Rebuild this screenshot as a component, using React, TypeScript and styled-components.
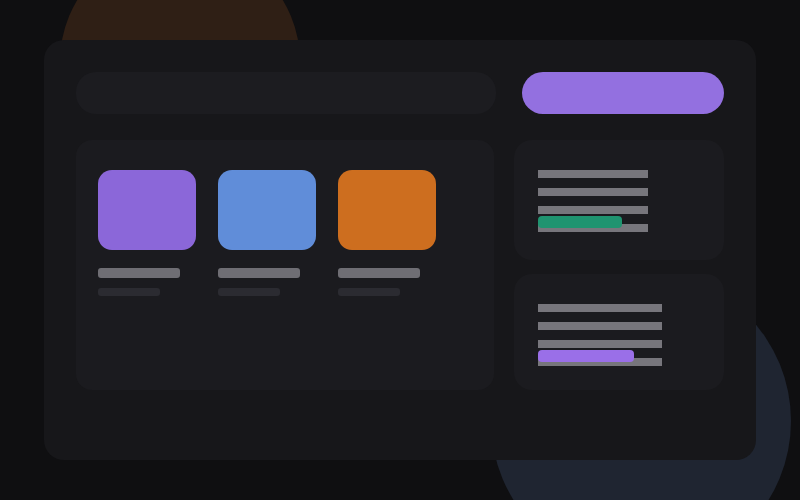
import styled, { createGlobalStyle } from "styled-components";

const GlobalStyle = createGlobalStyle`
  html, body {
    margin: 0;
    padding: 0;
    background: #0f0f11;
    font-family: "Inter", "Liberation Sans", sans-serif;
  }
`;

const tiles = [
  { color: "#8b67d9" },
  { color: "#608dd9" },
  { color: "#cd6e1f" },
];

const cards = [
  { lineWidth: 110, pill: 84, pillColor: "#1f9470", height: 120 },
  { lineWidth: 124, pill: 96, pillColor: "#9a6fe8", height: 116 },
];

function App() {
  return (
    <>
      <GlobalStyle />
      <Page>
        <Blob $size={240} $left={60} $top={-58} $color="#2f1f15" />
        <Blob $size={300} $left={491} $top={271} $color="#1f2531" />
        <Card>
          <Header>
            <Search />
            <Action />
          </Header>
          <Body>
            <Gallery>
              {tiles.map((t, i) => (
                <Item key={i}>
                  <Thumb $color={t.color} />
                  <Title />
                  <Caption />
                </Item>
              ))}
            </Gallery>
            <Side>
              {cards.map((c, i) => (
                <StatCard key={i} $height={c.height}>
                  <Lines>
                    {[0, 1, 2, 3].map((n) => (
                      <Line key={n} $width={c.lineWidth} />
                    ))}
                    <Pill $width={c.pill} $color={c.pillColor} />
                  </Lines>
                </StatCard>
              ))}
            </Side>
          </Body>
        </Card>
      </Page>
    </>
  );
}

const Page = styled.div`
  position: relative;
  width: 800px;
  height: 500px;
  overflow: hidden;
  background: #0f0f11;
`;

const Blob = styled.div<{ $size: number; $left: number; $top: number; $color: string }>`
  position: absolute;
  width: ${(p) => p.$size}px;
  height: ${(p) => p.$size}px;
  left: ${(p) => p.$left}px;
  top: ${(p) => p.$top}px;
  border-radius: 50%;
  background: ${(p) => p.$color};
`;

const Card = styled.div`
  position: relative;
  margin: 40px 44px 0;
  height: 420px;
  box-sizing: border-box;
  padding: 32px;
  border-radius: 20px;
  background: #17171a;
  display: flex;
  flex-direction: column;
  gap: 26px;
`;

const Header = styled.div`
  display: flex;
  gap: 26px;
  height: 42px;
`;

const Search = styled.div`
  width: 420px;
  border-radius: 20px;
  background: #1c1c20;
`;

const Action = styled.div`
  width: 202px;
  border-radius: 21px;
  background: #9370e0;
`;

const Body = styled.div`
  display: flex;
  gap: 20px;
`;

const Gallery = styled.div`
  width: 418px;
  height: 250px;
  box-sizing: border-box;
  padding: 30px 22px;
  border-radius: 16px;
  background: #1b1b1f;
  display: flex;
  gap: 22px;
  align-items: flex-start;
`;

const Item = styled.div`
  display: flex;
  flex-direction: column;
`;

const Thumb = styled.div<{ $color: string }>`
  width: 98px;
  height: 80px;
  border-radius: 14px;
  background: ${(p) => p.$color};
`;

const Title = styled.div`
  width: 82px;
  height: 10px;
  margin-top: 18px;
  border-radius: 3px;
  background: #6f6e74;
`;

const Caption = styled.div`
  width: 62px;
  height: 8px;
  margin-top: 10px;
  border-radius: 3px;
  background: #2b2b31;
`;

const Side = styled.div`
  width: 210px;
  display: flex;
  flex-direction: column;
  gap: 14px;
`;

const StatCard = styled.div<{ $height: number }>`
  height: ${(p) => p.$height}px;
  box-sizing: border-box;
  padding: 30px 24px;
  border-radius: 18px;
  background: #1b1b1f;
`;

const Lines = styled.div`
  position: relative;
  display: flex;
  flex-direction: column;
  gap: 10px;
`;

const Line = styled.div<{ $width: number }>`
  width: ${(p) => p.$width}px;
  height: 8px;
  background: #77767c;
`;

const Pill = styled.div<{ $width: number; $color: string }>`
  position: absolute;
  left: 0;
  top: 46px;
  width: ${(p) => p.$width}px;
  height: 12px;
  border-radius: 4px;
  background: ${(p) => p.$color};
`;

export default App;
